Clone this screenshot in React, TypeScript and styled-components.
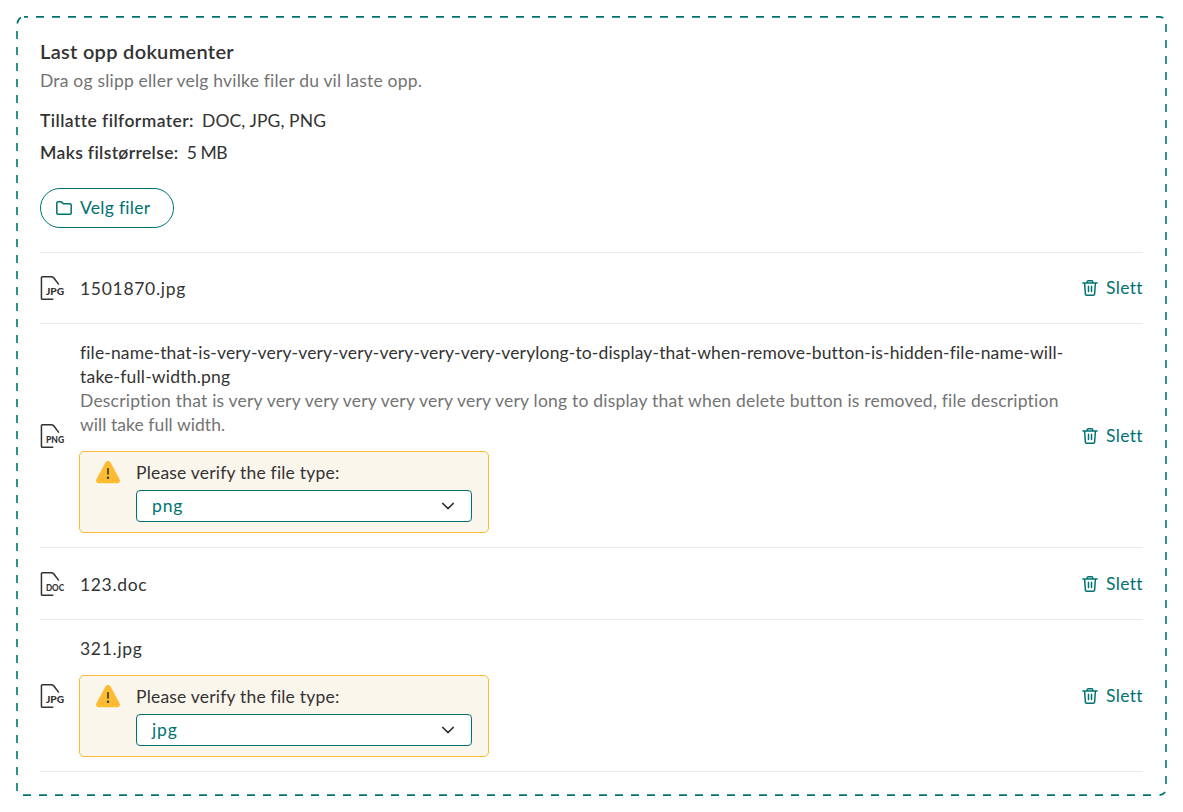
import React from 'react';
import styled, { createGlobalStyle } from 'styled-components';

const GlobalStyle = createGlobalStyle`
  * { box-sizing: border-box; }
  body {
    margin: 0;
    background: #fff;
    color: #333;
    font-family: Lato, sans-serif;
    font-size: 17.5px;
    line-height: 24px;
    font-variant-ligatures: none;
  }
`;

const SEA_GREEN = '#007272';

const Upload = styled.section`
  position: relative;
  margin: 16px;
  width: 1151px;
  height: 780px;
  padding: 23px 24px 24px;
`;
const Outline = styled.svg`
  position: absolute;
  inset: 0;
  width: 100%;
  height: 100%;
  pointer-events: none;
`;
const Text = styled.span<{ $spacing?: number }>`
  letter-spacing: ${p => p.$spacing ?? 0}px;
`;
const Title = styled.h2`
  margin: 0;
  font-size: 20px;
  font-weight: 600;
  line-height: 24px;
  letter-spacing: 0.3px;
`;
const Lead = styled.p`
  margin: 6px 0 0;
  color: #737373;
  letter-spacing: 0.2px;
`;
const Facts = styled.dl`
  margin: 16px 0 0;
  display: grid;
  gap: 8px;
`;
const Fact = styled.div`
  display: flex;
  gap: 8px;
`;
const Term = styled.dt<{ $spacing: number }>`
  font-weight: 600;
  letter-spacing: ${p => p.$spacing}px;
`;
const Value = styled.dd<{ $spacing: number }>`
  margin: 0;
  letter-spacing: ${p => p.$spacing}px;
`;
const PickButton = styled.button`
  display: flex;
  align-items: center;
  gap: 8px;
  width: 134px;
  height: 40px;
  margin-top: 23px;
  padding: 0 15px;
  border: 1px solid ${SEA_GREEN};
  border-radius: 20px;
  background: #fff;
  color: ${SEA_GREEN};
  font: inherit;
  letter-spacing: 0.28px;
`;
const FileList = styled.ul`
  margin: 24px 0 0;
  padding: 0;
  list-style: none;
  border-top: 1px solid #ebebeb;
`;
const FileRow = styled.li<{ $height: number }>`
  display: flex;
  align-items: center;
  min-height: ${p => p.$height}px;
  border-bottom: 1px solid #ebebeb;
`;
const FileBody = styled.div<{ $stacked: boolean }>`
  flex: 1;
  display: flex;
  flex-direction: column;
  margin-left: 16px;
  padding: ${p => (p.$stacked ? '17px 0 14px' : '2px 0 0')};
`;
const Muted = styled(Text)`
  color: #737373;
`;
const Line = styled.span`
  display: block;
  white-space: nowrap;
`;
const Warning = styled.div`
  display: flex;
  gap: 16px;
  width: 410px;
  height: 82px;
  margin: 14px 0 0 -1px;
  padding: 9px 16px;
  border: 1px solid #fdbb31;
  border-radius: 5px;
  background: #fbf6ec;
`;
const WarningBody = styled.div`
  flex: 1;
  display: flex;
  flex-direction: column;
  gap: 5px;
`;
const Select = styled.div`
  display: flex;
  align-items: center;
  justify-content: space-between;
  height: 32px;
  padding: 0 15px;
  border: 1px solid ${SEA_GREEN};
  border-radius: 4px;
  background: #fff;
  color: ${SEA_GREEN};
  letter-spacing: 0.9px;
`;
const DeleteButton = styled.button`
  display: flex;
  align-items: center;
  gap: 8px;
  width: 61px;
  padding: 0;
  border: 0;
  background: none;
  color: ${SEA_GREEN};
  font: inherit;
  letter-spacing: 0.35px;
`;
const Icon = styled.svg`
  display: block;
  flex: none;
`;

const FileIcon = ({ label }: { label: string }) => (
  <Icon width="24" height="24" viewBox="0 0 24 24" fill="none" overflow="visible">
    <path d="M13.3 23.25H2.2A.75.75 0 0 1 1.45 22.5V1.5A.75.75 0 0 1 2.2.75H11.8L13.6 1.7L18.9 8.6" stroke="#333" strokeWidth="1.5" />
    <text x="5.9" y="18.6" fill="#333" fontFamily="Lato, sans-serif" fontWeight="900" fontSize="9.2" textLength="18.2" lengthAdjust="spacingAndGlyphs">{label}</text>
  </Icon>
);
const FolderIcon = () => (
  <Icon width="16" height="16" viewBox="0 0 16 16" fill="none" stroke="currentColor" strokeWidth="1.5" strokeLinejoin="round">
    <path d="M.8 13V3A1.2 1.2 0 0 1 2 1.8H5.2L7.6 3.8H14A1.2 1.2 0 0 1 15.2 5V13A1.2 1.2 0 0 1 14 14.2H2A1.2 1.2 0 0 1 .8 13Z" />
  </Icon>
);
const TrashIcon = () => (
  <Icon width="16" height="16" viewBox="0 0 16 16" fill="none" stroke="currentColor" strokeWidth="1.5" strokeLinecap="round" strokeLinejoin="round">
    <path d="M.9 2.9H15.1M5.3 2.6V1.7A.9.9 0 0 1 6.2.8H9.8A.9.9 0 0 1 10.7 1.7V2.6M2.6 3L3.4 14.1A1.2 1.2 0 0 0 4.6 15.2H11.4A1.2 1.2 0 0 0 12.6 14.1L13.4 3M6.5 6.2V11.6M9.5 6.2V11.6" />
  </Icon>
);
const WarningIcon = () => (
  <Icon width="24" height="24" viewBox="0 0 24 24">
    <path d="M9.2 1.9C10.4-.5 13.6-.5 14.8 1.9L23.6 18.3C24.6 20.4 23.5 22.2 21.3 22.2H2.7C.5 22.2-.6 20.4.4 18.3Z" fill="#fdbb31" />
    <path d="M12 7.8V13" stroke="#333" strokeWidth="1.6" strokeLinecap="round" />
    <circle cx="12" cy="16.8" r="1.2" fill="#333" />
  </Icon>
);
const Chevron = () => (
  <Icon width="16" height="16" viewBox="0 0 16 16" fill="none" stroke="#333" strokeWidth="1.5" strokeLinecap="round" strokeLinejoin="round">
    <path d="M2.7 5.4L8 10.6L13.3 5.4" />
  </Icon>
);
const DashedOutline = () => (
  <Outline viewBox="0 0 1151 780" fill="none" stroke={SEA_GREEN} strokeWidth="1.6">
    <path d="M8 .9H1139" strokeDasharray="8" strokeDashoffset="4" />
    <path d="M1150 8V775" strokeDasharray="8" />
    <path d="M1135 779.1H7" strokeDasharray="8" />
    <path d="M1 775V15" strokeDasharray="8" />
    <path d="M1.2 7.5Q2 3 5 1.5M1140 .9H1143Q1145.5 1 1147.3 2M1149.2 776Q1147.5 778.6 1143.5 779.1" />
  </Outline>
);

interface TextLine { text: string; spacing: number }
interface UploadedFile { kind: string; height: number; name: TextLine[]; description?: TextLine[]; type?: string }

const files: UploadedFile[] = [
  { kind: 'JPG', height: 71, name: [{ text: '1501870.jpg', spacing: 0.7 }] },
  {
    kind: 'PNG',
    height: 224,
    name: [
      { text: 'file-name-that-is-very-very-very-very-very-very-very-verylong-to-display-that-when-remove-button-is-hidden-file-name-will-', spacing: 0.14 },
      { text: 'take-full-width.png', spacing: 0.21 },
    ],
    description: [
      { text: 'Description that is very very very very very very very very long to display that when delete button is removed, file description', spacing: 0.205 },
      { text: 'will take full width.', spacing: 0.06 },
    ],
    type: 'png',
  },
  { kind: 'DOC', height: 72, name: [{ text: '123.doc', spacing: 0.65 }] },
  { kind: 'JPG', height: 152, name: [{ text: '321.jpg', spacing: 0.7 }], type: 'jpg' },
];

export default function App() {
  return (
    <>
      <GlobalStyle />
      <Upload>
        <DashedOutline />
        <Title>Last opp dokumenter</Title>
        <Lead>Dra og slipp eller velg hvilke filer du vil laste opp.</Lead>
        <Facts>
          <Fact><Term $spacing={0.42}>Tillatte filformater:</Term><Value $spacing={0.1}>DOC, JPG, PNG</Value></Fact>
          <Fact><Term $spacing={0.35}>Maks filstørrelse:</Term><Value $spacing={-0.4}>5 MB</Value></Fact>
        </Facts>
        <PickButton type="button"><FolderIcon />Velg filer</PickButton>
        <FileList>
          {files.map((file, i) => (
            <FileRow key={i} $height={file.height}>
              <FileIcon label={file.kind} />
              <FileBody $stacked={!!file.type}>
                {file.name.map(l => <Line key={l.text}><Text $spacing={l.spacing}>{l.text}</Text></Line>)}
                {file.description?.map(l => <Line key={l.text}><Muted $spacing={l.spacing}>{l.text}</Muted></Line>)}
                {file.type && (
                  <Warning>
                    <WarningIcon />
                    <WarningBody>
                      <Text $spacing={0.2}>Please verify the file type:</Text>
                      <Select>{file.type}<Chevron /></Select>
                    </WarningBody>
                  </Warning>
                )}
              </FileBody>
              <DeleteButton type="button"><TrashIcon />Slett</DeleteButton>
            </FileRow>
          ))}
        </FileList>
      </Upload>
    </>
  );
}
